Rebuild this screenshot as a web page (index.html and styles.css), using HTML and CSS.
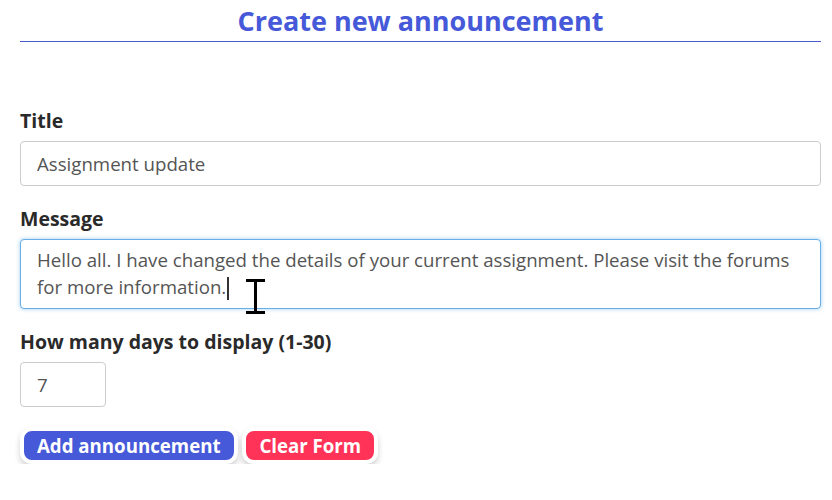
FILE: index.html
```html
<!DOCTYPE html>
<html lang="en">
<head>
<meta charset="utf-8">
<title>Create new announcement</title>
<link rel="stylesheet" href="styles.css">
</head>
<body>
<main class="page">
  <h1 class="heading">Create new announcement</h1>
  <form class="form">
    <div class="group">
      <label class="label" for="title">Title</label>
      <input class="field" id="title" type="text" value="Assignment update">
    </div>
    <div class="group">
      <label class="label">Message</label>
      <div class="field area focused">Hello all. I have changed the details of your current assignment. Please visit the forums for more information.<span class="caret"></span></div>
    </div>
    <div class="group">
      <label class="label" for="days">How many days to display (1-30)</label>
      <input class="field days" id="days" type="text" value="7">
    </div>
    <div class="actions">
      <button type="button" class="btn btn-blue">Add announcement</button>
      <button type="button" class="btn btn-red">Clear Form</button>
    </div>
  </form>
  <svg class="ibeam" width="21" height="35" viewBox="0 0 21 35" aria-hidden="true">
    <path d="M1 1.5h19M10.5 1.5v32M1 33.5h19" stroke="#000" stroke-width="3" fill="none"/>
  </svg>
</main>
</body>
</html>
```
FILE: styles.css
```css
html, body {
  margin: 0;
  padding: 0;
  background: #fff;
}
body {
  font-family: "Open Sans", "Liberation Sans", sans-serif;
  font-size: 18.67px;
  color: #333;
}
.page {
  position: relative;
  padding: 0 11px 0 20px;
}
.heading {
  margin: 0;
  padding: 6px 0 5px;
  text-align: center;
  font-size: 27px;
  line-height: 30px;
  font-weight: 700;
  color: #4659d9;
  border-bottom: 1px solid #4a5bd0;
}
.form {
  padding-top: 66px;
}
.group {
  margin-bottom: 20px;
}
.label {
  display: block;
  font-weight: 700;
  font-size: 19.5px;
  line-height: 26px;
  color: #2a2a2a;
  margin-bottom: 7px;
}
.field {
  display: block;
  box-sizing: border-box;
  width: 100%;
  margin: 0;
  padding: 8px 16px;
  font-family: "Open Sans", "Liberation Sans", sans-serif;
  font-size: 18.67px;
  line-height: 26.67px;
  height: 45px;
  color: #555;
  background: #fff;
  border: 1px solid #ccc;
  border-radius: 4px;
  outline: none;
}
.area {
  height: 70px;
  padding-top: 7px;
}
.focused {
  border-color: #66afe9;
  box-shadow: 0 0 4px rgba(102, 175, 233, 0.6);
}
.caret {
  display: inline-block;
  width: 2px;
  height: 23px;
  background: #333;
  vertical-align: -6px;
  margin-left: 1px;
}
.days {
  width: 86px;
}
.actions {
  padding-top: 0;
}
.btn {
  font-family: "Open Sans", "Liberation Sans", sans-serif;
  font-size: 18.67px;
  font-weight: 700;
  line-height: 25px;
  color: #fff;
  padding: 2px 13px;
  border: 4px solid #fff;
  border-radius: 12px;
  box-shadow: 0 4px 6px rgba(0, 0, 0, 0.18);
  cursor: pointer;
  margin: 0;
}
.btn-blue {
  background: #4659d9;
}
.btn-red {
  background: #ff3358;
}
.ibeam {
  position: absolute;
  left: 245px;
  top: 279px;
}
```
